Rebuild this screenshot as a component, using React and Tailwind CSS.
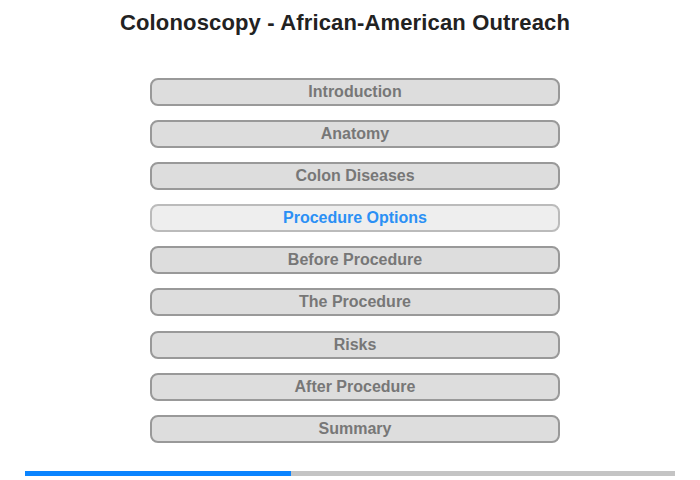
import { useState } from "react";

const sections = [
  "Introduction",
  "Anatomy",
  "Colon Diseases",
  "Procedure Options",
  "Before Procedure",
  "The Procedure",
  "Risks",
  "After Procedure",
  "Summary",
];

export default function App() {
  const [active, setActive] = useState(3);

  return (
    <div
      className="w-[700px] h-[480px] bg-white"
      style={{ fontFamily: '"Liberation Sans", Arial, sans-serif' }}
    >
      <h1 className="pt-[10px] pr-[10px] text-center text-[22px] leading-[25px] font-bold text-[#222222] tracking-[0.15px]">
        Colonoscopy - African-American Outreach
      </h1>

      <div className="mt-[43px] ml-[150px] w-[410px] flex flex-col gap-[14.1px]">
        {sections.map((s, i) => (
          <button
            key={s}
            onClick={() => setActive(i)}
            className={
              i === active
                ? "h-[28px] rounded-[8px] border-2 border-[#bbbbbb] bg-[#eeeeee] text-[16px] font-bold text-[#2b90f5] leading-none"
                : "h-[28px] rounded-[8px] border-2 border-[#999999] bg-[#dddddd] text-[16px] font-bold text-[#777777] leading-none"
            }
          >
            {s}
          </button>
        ))}
      </div>

      <div className="mt-[28px] mx-[25px] h-[5px] flex bg-[#c4c4c4]">
        <div className="w-[266px] h-full bg-[#0a84ff]" />
      </div>
    </div>
  );
}
